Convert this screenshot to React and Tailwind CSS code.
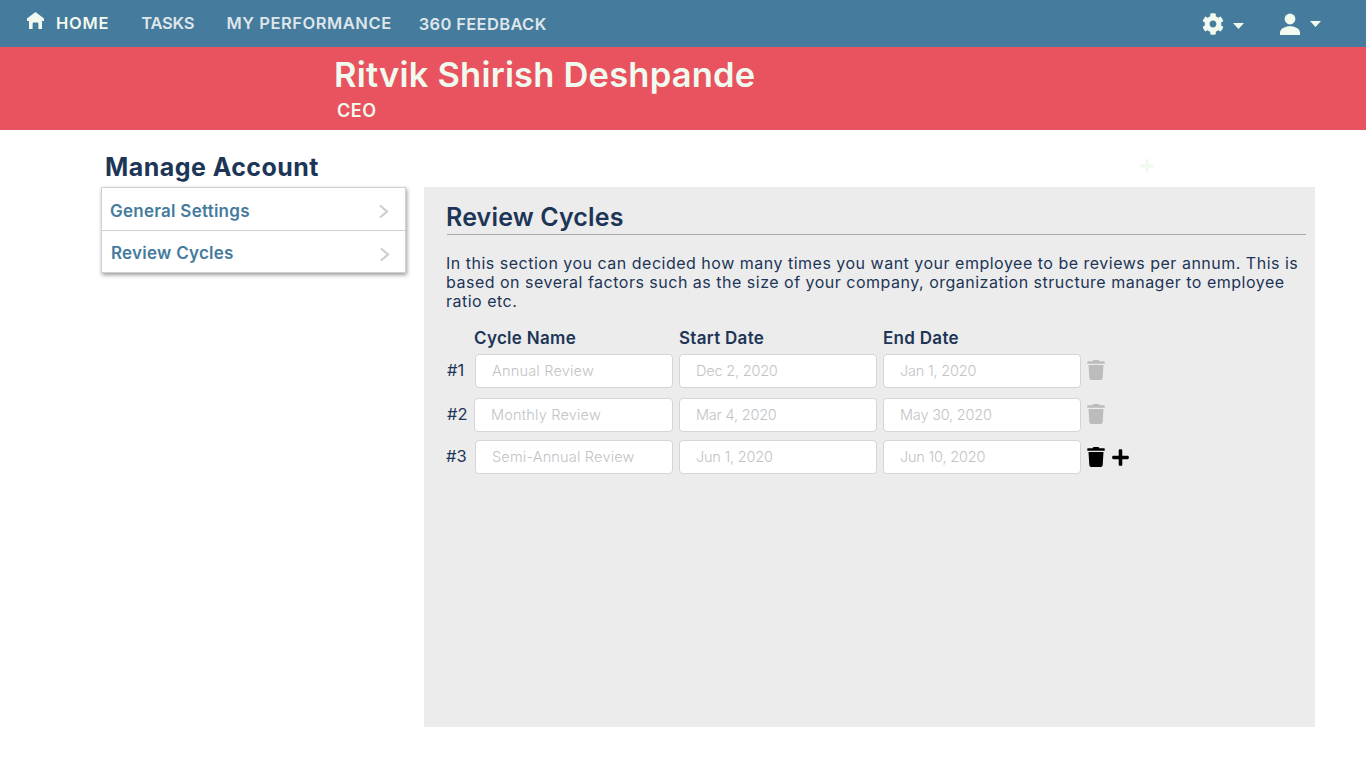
import React from 'react';
import { FaCog, FaTrash, FaPlus } from 'react-icons/fa';

const cycles = [
  { id: '#1', name: 'Annual Review', start: 'Dec 2, 2020', end: 'Jan 1, 2020' },
  { id: '#2', name: 'Monthly Review', start: 'Mar 4, 2020', end: 'May 30, 2020' },
  { id: '#3', name: 'Semi-Annual Review', start: 'Jun 1, 2020', end: 'Jun 10, 2020' },
];

const HomeIcon = () => (
  <svg viewBox="0 0 17 17" className="w-[17px] h-[17px] fill-[#f1faee]">
    <path d="M8.5 0 L17 6.5 V9 H15 V17 H11.4 V11.6 A1 1 0 0 0 10.4 10.6 H6.6 A1 1 0 0 0 5.6 11.6 V17 H2 V9 H0 V6.5 Z" />
  </svg>
);

const UserIcon = () => (
  <svg viewBox="0 0 22 22" className="w-[22px] h-[22px] fill-[#f1faee]">
    <circle cx="11" cy="6" r="5.4" />
    <path d="M1 22 V19.5 C1 15.5 6 13.2 11 13.2 S21 15.5 21 19.5 V22 Z" />
  </svg>
);

const Caret = ({ className }) => (
  <svg viewBox="0 0 11 6" className={className}>
    <path d="M0 0 H11 L5.5 6 Z" fill="#f1faee" />
  </svg>
);

const Chevron = () => (
  <svg viewBox="0 0 11 15" className="w-[11px] h-[15px]">
    <polyline points="2,1.5 9,7.5 2,13.5" fill="none" stroke="#cdcdcd" strokeWidth="2.2" />
  </svg>
);

const Field = ({ value, className }) => (
  <div className={`h-[34px] bg-white border border-[#d5d5d5] rounded-[4px] flex items-center text-[14.5px] font-light text-[#bfc3c6] ${className}`}>
    {value}
  </div>
);

const App = () => {
  return (
    <div className="min-h-[760px] bg-white font-['Inter','Liberation_Sans',sans-serif]">
      {/* Top nav */}
      <nav className="h-[47px] bg-[#457b9d] flex items-center pl-[27px] pr-[45px] text-[16.5px] font-semibold">
        <span className="mb-[6px]"><HomeIcon /></span>
        <a className="ml-[12px] text-[#f1faee] tracking-[0.75px]">HOME</a>
        <a className="ml-[32px] text-[#dfe6ea] tracking-[-0.2px]">TASKS</a>
        <a className="ml-[32px] text-[#dfe6ea] tracking-[0.55px]">MY PERFORMANCE</a>
        <a className="ml-[27px] mt-[2px] text-[#dfe6ea] tracking-[0.35px]">360 FEEDBACK</a>
        <div className="ml-auto flex items-center text-[#f1faee]">
          <FaCog className="w-[22px] h-[22px]" />
          <Caret className="ml-[9px] mt-[4px] w-[11px] h-[6px]" />
          <span className="ml-[35px]"><UserIcon /></span>
          <Caret className="ml-[9px] w-[11px] h-[6px]" />
        </div>
      </nav>

      {/* Profile banner */}
      <header className="h-[83px] bg-[#e8535f] pl-[334px] text-[#f1faee]">
        <h1 className="pt-[7px] text-[34.5px] leading-[42px] font-semibold tracking-[0.2px]">Ritvik Shirish Deshpande</h1>
        <p className="pl-[3px] mt-[4px] text-[18px] leading-[22px] font-semibold tracking-[0.5px]">CEO</p>
      </header>

      {/* Page title row */}
      <div className="h-[57px] flex items-center pl-[105px] pt-[19px]">
        <h2 className="text-[25px] font-bold text-[#1d3557] tracking-[0.45px]">Manage Account</h2>
        <FaPlus className="ml-[820px] -mt-[4px] w-[16px] h-[16px] text-[#f1faee]" />
      </div>

      <div className="flex items-start pl-[101px]">
        {/* Side menu */}
        <aside className="w-[305px] bg-white border border-[#d0d0d0] shadow-[1px_2px_4px_rgba(0,0,0,0.4)] text-[17px] font-semibold text-[#457b9d] tracking-[0.25px]">
          <div className="h-[43px] flex items-center justify-between pl-[8px] pr-[16px] pt-[5px] border-b border-[#cfcfcf]">
            General Settings
            <Chevron />
          </div>
          <div className="h-[41px] flex items-center justify-between pl-[9px] pr-[15px] pt-[5px]">
            Review Cycles
            <Chevron />
          </div>
        </aside>

        {/* Review cycles panel */}
        <main className="ml-[18px] w-[891px] h-[540px] bg-[#ececec] pl-[22px] pr-[9px] text-[#1d3557]">
          <h3 className="pt-[14px] text-[25px] leading-[32px] font-semibold tracking-[0.15px]">Review Cycles</h3>
          <div className="mt-[1px] ml-[1px] border-b border-[#a9a9a9]" />
          <p className="mt-[19px] text-[16px] leading-[19px] tracking-[0.5px]">
            In this section you can decided how many times you want your employee to be reviews per annum. This is based on several factors such as the size of your company, organization structure manager to employee ratio etc.
          </p>

          <div className="mt-[17px] flex pl-[28px] text-[17px] leading-[20px] font-semibold tracking-[0.3px]">
            <span className="w-[205px]">Cycle Name</span>
            <span className="w-[204px]">Start Date</span>
            <span>End Date</span>
          </div>

          <div className="mt-[6px] flex flex-col">
            {cycles.map((c, i) => (
              <div key={c.id} className={i === 1 ? 'flex items-center gap-[6px] mt-[10px]' : i === 2 ? 'flex items-center gap-[6px] mt-[8px]' : 'flex items-center gap-[6px]'}>
                <span className={i === 1 ? 'w-[22px] pl-[1px] mb-[2px] text-[16.5px]' : i === 0 ? 'w-[23px] pl-[1px] mb-[2px] text-[16.5px]' : 'w-[23px] mb-[2px] text-[16.5px]'}>{c.id}</span>
                <Field value={c.name} className={i === 1 ? 'w-[199px] pl-[16px] tracking-[0.2px]' : 'w-[198px] pl-[16px] tracking-[0.2px]'} />
                <Field value={c.start} className="w-[198px] pl-[16px] tracking-[-0.2px]" />
                <Field value={c.end} className="w-[198px] pl-[16px] tracking-[-0.2px]" />
                <FaTrash className={i === 2 ? 'mb-[1px] w-[18px] h-[20px] text-black' : 'mb-[2px] w-[18px] h-[20px] text-[#bcbcbc]'} />
                {i === 2 && <FaPlus className="w-[19px] h-[19px] text-black" />}
              </div>
            ))}
          </div>
        </main>
      </div>
    </div>
  );
};

export default App;
